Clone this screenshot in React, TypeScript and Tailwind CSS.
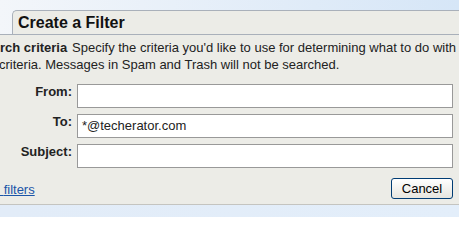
export default function App() {
  return (
    <div className="w-[459px] h-[217px] overflow-hidden flex flex-col bg-gradient-to-r from-[#f3f6fa] to-[#d6e6f7] font-['Liberation_Sans',Arial,sans-serif] text-[13px] text-[#222]">
      {/* Tab header */}
      <div className="pt-[10px] pl-[12px]">
        <div className="h-[24px] bg-[#ecece7] border-t border-l border-[#a9b0ba] rounded-tl-[5px] pl-[5px] flex items-center">
          <span className="text-[16px] font-bold text-[#111] leading-none">Create a Filter</span>
        </div>
      </div>

      {/* Body */}
      <div className="h-[171px] bg-[#ecece7] border-t border-b border-t-[#a9b0ba] border-b-[#c4c4c0] pr-[6px] flex flex-col">
        <div className="pt-[4px] leading-[17px] whitespace-nowrap">
          <div>
            <span className="inline-block w-[72px] font-bold">rch criteria</span>
            Specify the criteria you'd like to use for determining what to do with
          </div>
          <div className="-ml-[1px]">criteria. Messages in Spam and Trash will not be searched.</div>
        </div>

        <div className="mt-[11px] flex flex-col gap-[6px]">
          {[
            { label: 'From:', value: '' },
            { label: 'To:', value: '*@techerator.com' },
            { label: 'Subject:', value: '' },
          ].map((row) => (
            <div key={row.label} className="flex items-start gap-[5px]">
              <div className="w-[72px] text-right font-bold leading-[13px] pt-[1px]">{row.label}</div>
              <div className="flex-1 h-[24px] bg-white border border-[#999] pl-[4px] flex items-center">
                {row.value}
              </div>
            </div>
          ))}
        </div>

        <div className="mt-[9px] flex items-center justify-between">
          <a className="text-[#1a55a8] underline mt-[3px] cursor-pointer">{'\u00a0'}filters</a>
          <button className="w-[62px] h-[21px] rounded-[3px] border border-[#003c74] bg-gradient-to-b from-white to-[#e6e5df] text-[13px] text-black leading-none">
            Cancel
          </button>
        </div>
      </div>

      <div className="flex-1 bg-gradient-to-r from-[#e2ecf8] to-[#e3eefa]" />
    </div>
  );
}
